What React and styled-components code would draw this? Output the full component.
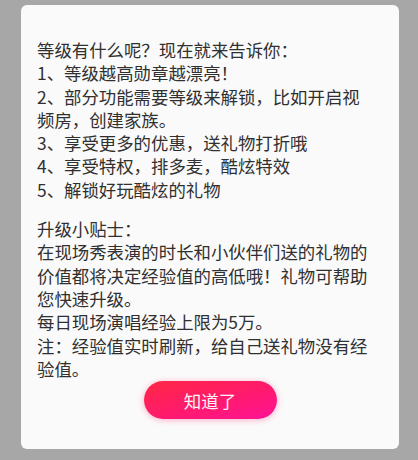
import React from 'react';
import styled, { createGlobalStyle } from 'styled-components';

const GlobalStyle = createGlobalStyle`
  html, body {
    margin: 0;
    padding: 0;
    background: #a7a7a7;
  }
  body {
    font-family: "Noto Sans CJK SC", "Noto Sans", sans-serif;
  }
`;

const intro = [
  '等级有什么呢？现在就来告诉你：',
  '1、等级越高勋章越漂亮！',
  '2、部分功能需要等级来解锁，比如开启视',
  '频房，创建家族。',
  '3、享受更多的优惠，送礼物打折哦',
  '4、享受特权，排多麦，酷炫特效',
  '5、解锁好玩酷炫的礼物',
];

const tips = [
  '升级小贴士：',
  '在现场秀表演的时长和小伙伴们送的礼物的',
  '价值都将决定经验值的高低哦！礼物可帮助',
  '您快速升级。',
  '每日现场演唱经验上限为5万。',
  '注：经验值实时刷新，给自己送礼物没有经',
  '验值。',
];

const App = () => (
  <>
    <GlobalStyle />
    <Page>
      <Dialog>
        <Paragraph>
          {intro.map((line) => (
            <Line key={line}>{line}</Line>
          ))}
        </Paragraph>
        <Paragraph>
          {tips.map((line) => (
            <Line key={line}>{line}</Line>
          ))}
        </Paragraph>
        <Actions>
          <ConfirmButton type="button">知道了</ConfirmButton>
        </Actions>
      </Dialog>
    </Page>
  </>
);

export default App;

const Page = styled.div`
  width: 418px;
  height: 460px;
  padding: 5px 19px 0 21px;
  box-sizing: border-box;
`;

const Dialog = styled.div`
  width: 378px;
  height: 444px;
  box-sizing: border-box;
  background: #fafafa;
  border-radius: 6px;
  padding: 33px 16px 0 16px;
  display: flex;
  flex-direction: column;
  gap: 16px;
`;

const Paragraph = styled.div`
  display: flex;
  flex-direction: column;
`;

const Line = styled.div`
  font-size: 17.4px;
  line-height: 23.3px;
  color: #303030;
  white-space: nowrap;
`;

const Actions = styled.div`
  display: flex;
  justify-content: center;
  margin-top: -15px;
`;

const ConfirmButton = styled.button`
  width: 133px;
  height: 38px;
  border: none;
  border-radius: 19px;
  background: linear-gradient(165deg, #ff2744 0%, #ff1a6e 55%, #ff1396 100%);
  box-shadow: 0 1px 6px rgba(255, 30, 110, 0.35);
  color: #fff3f8;
  font-family: "Noto Sans CJK SC", "Noto Sans", sans-serif;
  font-size: 17.5px;
  padding: 0;
  cursor: pointer;
`;
